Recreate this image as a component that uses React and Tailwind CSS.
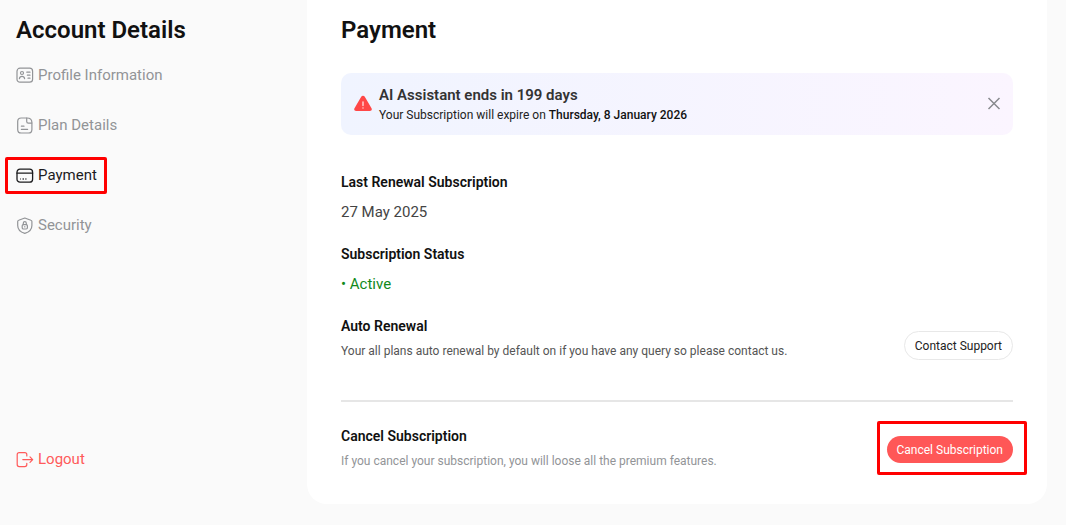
const ProfileIcon = () => (
    <svg width="18" height="18" viewBox="0 0 18 18" fill="none" stroke="currentColor" strokeWidth="1.2" strokeLinecap="round">
        <rect x="1" y="1.2" width="15.6" height="14" rx="3" />
        <circle cx="6" cy="6" r="1.5" />
        <path d="M3.4 11.6c.2-1.5 1.2-2.2 2.6-2.2s2.4.7 2.6 2.2M10.8 5.2H14M11.4 8.2H14M12 11.2h2" />
    </svg>
);

const PlanIcon = () => (
    <svg width="18" height="18" viewBox="0 0 18 18" fill="none" stroke="currentColor" strokeWidth="1.2" strokeLinecap="round" strokeLinejoin="round">
        <path d="M10.9 1H5.2C2.9 1 1.7 2.2 1.7 4.6v7.8c0 2.4 1.2 3.6 3.5 3.6h7.2c2.3 0 3.5-1.2 3.5-3.6V5.600c0-2.800-2-4.600-5-4.600z" />
        <path d="M10.7 1.2v3.2c0 1.1.6 1.7 1.7 1.7h3.300M5.400 9.200H8M5.400 12.400h6.200" />
    </svg>
);

const CardIcon = () => (
    <svg width="18" height="18" viewBox="0 0 18 18" fill="none" stroke="currentColor" strokeWidth="1.3" strokeLinecap="round">
        <rect x="1" y="2.2" width="15.6" height="13" rx="3" />
        <path d="M1 6.200h15.600" />
        <path d="M4 12h.6M6.600 12h1.200M9.400 12h1" strokeLinecap="butt" strokeWidth="1.500" />
    </svg>
);

const SecurityIcon = () => (
    <svg width="18" height="18" viewBox="0 0 18 18" fill="none" stroke="currentColor" strokeWidth="1.2" strokeLinecap="round" strokeLinejoin="round">
        <path d="M8.8 1 2.7 3.2c-.6.2-1 .6-1 1.3v3.9c0 3.5 2.8 6.6 7.1 8 4.3-1.4 7.1-4.5 7.1-8V4.5c0-.7-.4-1.1-1-1.3z" />
        <rect x="6.2" y="7.6" width="5.2" height="4.4" rx="1.2" />
        <path d="M7.3 7.6V6.3c0-1 .6-1.6 1.5-1.6s1.5.6 1.5 1.6v1.3M8.8 9.6v.4" />
    </svg>
);

const LogoutIcon = () => (
    <svg width="18" height="18" viewBox="0 0 18 18" fill="none" stroke="currentColor" strokeWidth="1.2" strokeLinecap="round" strokeLinejoin="round">
        <path d="M10.8 4.9V3.6c0-1.3-.7-2-2-2H3.2c-1.3 0-2 .7-2 2v10c0 1.3.7 2 2 2h5.6c1.3 0 2-.7 2-2v-1.3" />
        <path d="M6.8 8.6h9.8M14 5.9l2.7 2.7-2.7 2.7" />
    </svg>
);

const WarningIcon = () => (
    <svg className="shrink-0" width="18" height="18" viewBox="0 0 18 18">
        <path d="M7.2 1.7c.8-1.4 2.8-1.4 3.6 0l6.7 11.6c.8 1.4-.1 2.7-1.6 2.7H2.1c-1.5 0-2.4-1.3-1.6-2.7z" fill="#ff4747" />
        <path d="M9 6.8v3.8M9 12.7v.4" stroke="#fff" strokeWidth="1.1" strokeLinecap="round" />
    </svg>
);

const navItems = [
    { label: "Profile Information", Icon: ProfileIcon },
    { label: "Plan Details", Icon: PlanIcon },
    { label: "Payment", Icon: CardIcon, active: true },
    { label: "Security", Icon: SecurityIcon },
];

const Sidebar = () => {
    return (
        <aside className="flex w-[307px] shrink-0 flex-col items-start pt-3 pl-[5px]">
            <h2 className="pl-[11px] text-2xl leading-9 font-semibold">Account Details</h2>
            <nav className="mt-[9px] flex flex-col items-start gap-[13px]">
                {navItems.map(({ label, Icon, active }) => (
                    <button
                        key={label}
                        type="button"
                        className={`flex h-[37px] items-center gap-1 rounded-[2px] border-3 pr-[7px] pl-2 text-[15px] ${
                            active ? "border-[#ff0000] text-[#1c1c1e]" : "border-transparent text-[#929497]"
                        }`}
                    >
                        <Icon />
                        {label}
                    </button>
                ))}
            </nav>
            <button type="button" className="mt-[197px] flex h-[37px] items-center gap-1 pl-[11px] text-[15px] text-[#ff5a5a]">
                <LogoutIcon />
                Logout
            </button>
        </aside>
    );
};

const Banner = () => {
    return (
        <div className="mt-[25px] flex items-center rounded-[10px] bg-linear-to-r from-[#f0f4ff] to-[#fbf5ff] py-[11px] pr-3 pl-[13px]">
            <WarningIcon />
            <div className="ml-[7px] flex-1">
                <h3 className="text-[15px] leading-[22px] font-semibold text-[#333]">AI Assistant ends in 199 days</h3>
                <p className="text-xs leading-[18px] text-[#222]">
                    Your Subscription will expire on <strong className="font-medium text-[#111]">Thursday, 8 January 2026</strong>
                </p>
            </div>
            <button type="button" aria-label="Close" className="text-[#888a8e]">
                <svg width="14" height="14" viewBox="0 0 14 14" fill="none" stroke="currentColor" strokeWidth="1.5">
                    <path d="M1.5 1l11 11M12.5 1l-11 11" />
                </svg>
            </button>
        </div>
    );
};

const App = () => {
    return (
        <div className="flex min-h-screen items-start bg-[#fafafa] font-[Roboto,sans-serif] text-[#111]">
            <Sidebar />
            <main className="mr-[19px] flex-1 rounded-b-[20px] bg-white px-[34px] pt-3 pb-[29px]">
                <h1 className="text-2xl leading-9 font-semibold">Payment</h1>
                <Banner />
                <section className="mt-[37px]">
                    <h3 className="text-sm leading-5 font-semibold">Last Renewal Subscription</h3>
                    <p className="mt-2 text-[15px] leading-6 text-[#444]">27 May 2025</p>
                </section>
                <section className="mt-5">
                    <h3 className="text-sm leading-5 font-semibold">Subscription Status</h3>
                    <p className="mt-2 text-[15px] leading-6 text-[#118a1b]">• Active</p>
                </section>
                <section className="mt-5 flex items-end justify-between gap-4">
                    <div className="self-start">
                        <h3 className="text-sm leading-5 font-semibold">Auto Renewal</h3>
                        <p className="mt-1.5 text-xs leading-[18px] text-[#555]">
                            Your all plans auto renewal by default on if you have any query so please contact us.
                        </p>
                    </div>
                    <button type="button" className="h-[29px] shrink-0 rounded-full border border-[#e8e8e8] px-2.5 text-xs text-[#222]">
                        Contact Support
                    </button>
                </section>
                <hr className="mt-10 border-t-2 border-[#e6e6e6]" />
                <section className="mt-[19px] flex items-center justify-between gap-4">
                    <div>
                        <h3 className="text-sm leading-5 font-semibold">Cancel Subscription</h3>
                        <p className="mt-1.5 text-xs leading-[18px] text-[#929497]">
                            If you cancel your subscription, you will loose all the premium features.
                        </p>
                    </div>
                    <div className="-mr-3.5 flex shrink-0 rounded-[2px] border-3 border-[#ff0000] pt-3 pr-[11px] pb-[9px] pl-[7px]">
                        <button type="button" className="h-[27px] rounded-full bg-[#ff5757] px-2.5 text-xs text-white">
                            Cancel Subscription
                        </button>
                    </div>
                </section>
            </main>
        </div>
    );
};

export default App;
